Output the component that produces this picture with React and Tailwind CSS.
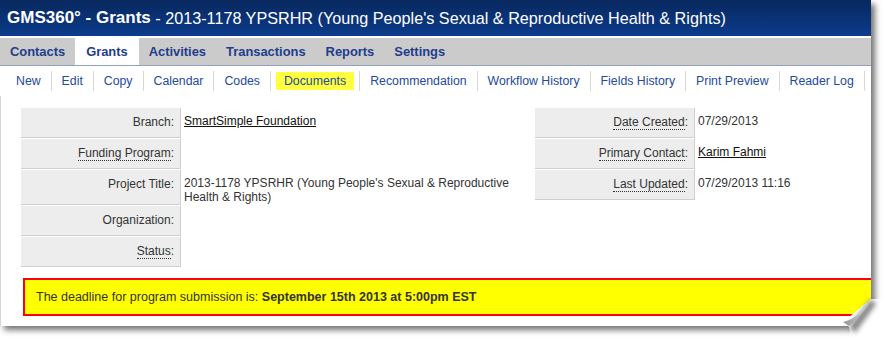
import React from 'react';

const tabs = ['Contacts', 'Grants', 'Activities', 'Transactions', 'Reports', 'Settings'];
const actions = ['New', 'Edit', 'Copy', 'Calendar', 'Codes', 'Documents', 'Recommendation', 'Workflow History', 'Fields History', 'Print Preview', 'Reader Log'];

const Label = ({ text, dotted }) => (
  <div className="min-h-[30px] bg-[#ededed] border-r border-b border-[#cfcfcf] text-right pr-[6px] pt-[7px] text-[12px] leading-[14px] text-[#333]">
    {dotted ? <span className="border-b border-dotted border-[#333]">{text}</span> : text}:
  </div>
);

const Value = ({ children }) => (
  <div className="pl-[3px] pt-[6px] pb-[1px] text-[12px] leading-[14px] text-[#333]">{children}</div>
);

function App() {
  return (
    <div className="w-[886px] h-[341px] bg-white relative font-['Liberation_Sans',Arial,sans-serif]">
      <div className="w-[871px] h-[326px] bg-white flex flex-col overflow-hidden shadow-[4px_4px_6px_rgba(0,0,0,0.55)]">
        {/* Header */}
        <div className="h-[36px] shrink-0 bg-gradient-to-b from-[#08285e] to-[#0c3c8c] flex items-center pl-[7px] text-white whitespace-nowrap">
          <span className="text-[17px] font-bold">GMS360° - Grants</span>
          <span className="text-[16.2px]">&nbsp;- 2013-1178 YPSRHR (Young People's Sexual &amp; Reproductive Health &amp; Rights)</span>
        </div>
        <div className="h-[2px] shrink-0 bg-white" />

        {/* Tabs */}
        <div className="h-[28px] shrink-0 bg-[#cbcbcb] border-b border-[#8fa3bd] flex">
          {tabs.map((t) => (
            <div
              key={t}
              className={`px-[10px] flex items-center text-[12.9px] font-bold text-[#1f3d8c] ${t === 'Grants' ? 'bg-white px-[11px]' : ''}`}
            >
              {t}
            </div>
          ))}
        </div>

        {/* Sub navigation */}
        <div className="h-[30px] shrink-0 flex items-center pl-[6px]">
          {actions.map((a) => (
            <div key={a} className="h-[20px] flex items-center border-r border-[#d8d8d8] text-[12.3px] text-[#234a9e] whitespace-nowrap">
              {a === 'Documents' ? (
                <span className="mx-[5px] px-[8px] h-[18px] flex items-center bg-[#ffff40]">{a}</span>
              ) : (
                <span className="px-[10px]">{a}</span>
              )}
            </div>
          ))}
        </div>

        {/* Body */}
        <div className="flex-1 border-l border-[#d4d4d4] pt-[12px]">
          <div className="flex pl-[20px]">
            <div className="w-[500px] grid grid-cols-[160px_1fr] gap-y-[1px] content-start">
              <Label text="Branch" />
              <Value><span className="underline text-[#111]">SmartSimple Foundation</span></Value>
              <Label text="Funding Program" dotted />
              <Value />
              <Label text="Project Title" />
              <Value>2013-1178 YPSRHR (Young People's Sexual &amp; Reproductive Health &amp; Rights)</Value>
              <Label text="Organization" />
              <Value />
              <Label text="Status" dotted />
              <Value />
            </div>
            <div className="ml-[14px] w-[320px] grid grid-cols-[160px_1fr] gap-y-[1px] content-start">
              <Label text="Date Created" dotted />
              <Value>07/29/2013</Value>
              <Label text="Primary Contact" dotted />
              <Value><span className="underline text-[#111]">Karim Fahmi</span></Value>
              <Label text="Last Updated" dotted />
              <Value>07/29/2013 11:16</Value>
            </div>
          </div>

          <div className="mt-[11px] ml-[22px] -mr-[20px] h-[38px] border-2 border-[#ff0000] bg-[#ffff00] flex items-center pl-[11px] text-[12.5px] text-[#333] whitespace-nowrap">
            The deadline for program submission is:&nbsp;<b>September 15th 2013 at 5:00pm EST</b>
          </div>
        </div>
      </div>

      {/* Page curl */}
      <svg className="absolute left-[838px] top-[294px]" width="48" height="47" viewBox="0 0 48 47">
        <defs>
          <linearGradient id="curl" x1="0" y1="0.8" x2="1" y2="0.2">
            <stop offset="0" stopColor="#9a9a9a" />
            <stop offset="0.5" stopColor="#bdbdbd" />
            <stop offset="1" stopColor="#eeeeee" />
          </linearGradient>
          <filter id="soft" x="-50%" y="-50%" width="200%" height="200%">
            <feGaussianBlur stdDeviation="2.5" />
          </filter>
        </defs>
        <polygon points="5,28 33,5 48,5 48,47 14,47 11,33" fill="#ffffff" />
        <polygon points="33,5 38,10 17,39 11,33" fill="#666" opacity="0.8" filter="url(#soft)" />
        <path d="M5,28 Q22,24 33,5 Q25,20 11,32 Z" fill="url(#curl)" />
      </svg>
    </div>
  );
}

export default App;
